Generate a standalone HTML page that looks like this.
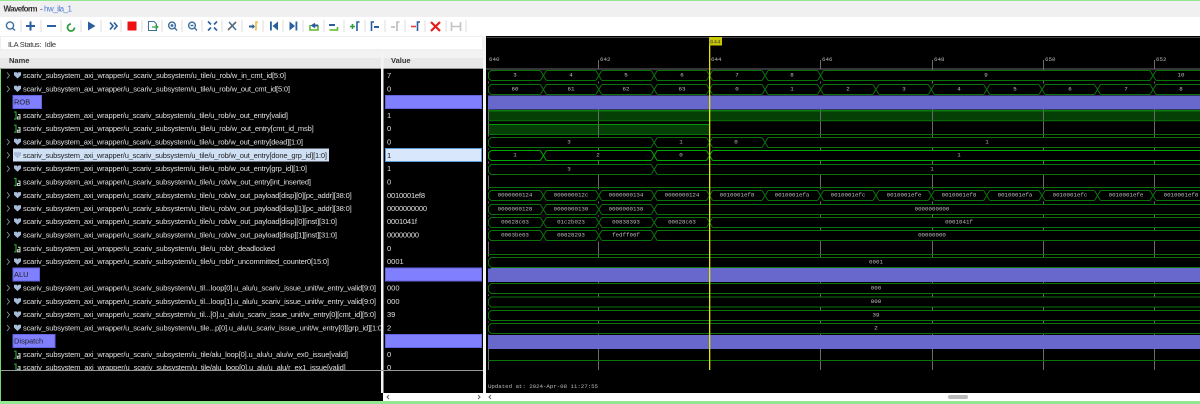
<!DOCTYPE html>
<html><head><meta charset="utf-8"><title>Waveform - hw_ila_1</title>
<style>
html,body{margin:0;padding:0;background:#000;width:1200px;height:404px;overflow:hidden}
svg{display:block}
.n{font:7.5px "Liberation Sans",sans-serif;fill:#e0e0e0}
.v{font:7.5px "Liberation Sans",sans-serif;fill:#e0e0e0}
.h{font:bold 7.5px "Liberation Sans",sans-serif;fill:#333}
.t{font:5.8px "Liberation Mono",monospace;fill:#c0c0c0;text-anchor:middle}
.m{font:5.8px "Liberation Mono",monospace;fill:#b8b8b8}
.r{stroke:#0a730a;fill:#000;stroke-width:1}
.s{stroke:#00a800}
.r text{stroke:none}
.g{fill:#6868cc}
.l{fill:#8080ff;stroke:#6464e0}
.ln{font:7.5px "Liberation Sans",sans-serif;fill:#222}
</style></head><body>
<svg width="1200" height="404" viewBox="0 0 1200 404" xmlns="http://www.w3.org/2000/svg">
<defs>
<clipPath id="nc"><rect x="0" y="69" width="381" height="301"/></clipPath>
<clipPath id="vc"><rect x="383" y="69" width="100" height="301"/></clipPath>
<clipPath id="wc"><rect x="486" y="37" width="714" height="333"/></clipPath>
<g id="x"><rect x="-3" y="-1" width="6" height="12" fill="#000" stroke="none"/><path d="M-3 0L3 10M-3 10L3 0" fill="none"/></g>
<g id="e"><rect x="486" y="-1" width="5" height="12" fill="#000" stroke="none"/><path d="M491 0L488.5 2.5V7.5L491 10" fill="none"/></g>
<g id="b"><path d="M-7 -3L-4.5 0L-7 3" fill="none" stroke="#999" stroke-width=".8"/><path d="M14 -3.2H17L17.5 -2L18 -3.2H21V-.3L17.5 3L14 -.3Z" transform="translate(-14 0)" fill="#a9bcd9"/></g>
<g id="o"><path d="M0 -3.5H2V3.5H0M1 3.5H2" fill="none" stroke="#2e9e3e" stroke-width="1.2"/><path d="M4 -1H6V3.5H3.5V1.5H6" fill="none" stroke="#ccc" stroke-width="1.1"/></g>
</defs>

<!-- window chrome -->
<rect width="1200" height="404" fill="#000"/>
<rect width="1200" height="17" fill="#f0f0f0"/>
<rect width="1200" height="1" fill="#93e793"/>
<text x="3.500" y="11.500" textLength="34" style="font:bold 8px 'Liberation Sans',sans-serif" fill="#333">Waveform</text>
<text x="40" y="11.500" style="font:8px 'Liberation Sans',sans-serif" fill="#333">-</text>
<text x="44" y="11.500" textLength="28" style="font:8px 'Liberation Sans',sans-serif" fill="#4a78d8">hw_ila_1</text>
<rect y="17" width="1200" height="19" fill="#fff"/>

<!-- toolbar separators -->
<path d="M21 20V32M41 20V32M61 20V32M81 20V32M101 20V32M121 20V32M142 20V32M162 20V32M182 20V32M202 20V32M222 20V32M242 20V32M263 20V32M283 20V32M303 20V32M324 20V32M344 20V32M365 20V32M385 20V32M405 20V32M425 20V32M446 20V32M466 20V32" stroke="#ddd" stroke-width="1"/>

<!-- toolbar icons -->
<g fill="none" stroke="#3d6f9e" stroke-width="1.4">
<circle cx="10" cy="25.5" r="3.6"/><path d="M12.7 28.2L15 30.5"/>
<path d="M26 26H35M30.5 21.5V30.5" stroke="#2a5f9e" stroke-width="2"/>
<path d="M47 26H56" stroke="#2a5f9e" stroke-width="2"/>
<path d="M74.5 27.5A3.5 3.5 0 1 1 71 24" stroke="#2e9e3e" stroke-width="1.8"/>
<path d="M110 22.5L113 26L110 29.5M114 22.5L117 26L114 29.5" stroke="#2a5f9e" stroke-width="1.6"/>
<circle cx="172" cy="25.5" r="3.4"/><path d="M174.6 28L177 30.5M170.5 25.5H173.5M172 24V27"/>
<circle cx="192" cy="25.5" r="3.4"/><path d="M194.6 28L197 30.5M190.5 25.5H193.5"/>
<path d="M208 21.5L211 24.5M217 21.5L214 24.5M208 30.5L211 27.5M217 30.5L214 27.5" stroke="#2a5f9e" stroke-width="1.6"/>
<path d="M228 30L236 22" stroke="#666" stroke-width="1.6"/><path d="M229 22L236 30" stroke="#3d6f9e" stroke-width="1.4"/>
</g>
<path d="M88 21.5V30.5L95.5 26Z" fill="#2a5f9e"/>
<rect x="127.500" y="21.500" width="9" height="9" fill="#ee1111"/>
<path d="M148.500 21.500H154L156.500 24V30.500H148.500Z" fill="#fff" stroke="#3d6f9e"/><path d="M152 27H157.500M155.500 25L157.800 27L155.500 29" fill="none" stroke="#2e9e3e" stroke-width="1.200"/>
<path d="M249 26.500H253" stroke="#2a5f9e" stroke-width="2"/><path d="M252.500 24L255 26.500L252.500 29Z" fill="#2a5f9e"/><path d="M256 30.500V22H258" fill="none" stroke="#e8c040" stroke-width="1.600"/>
<g fill="#2a5f9e"><rect x="270" y="21.500" width="1.800" height="9"/><path d="M278 21.500V30.500L272.500 26Z"/><rect x="295.500" y="21.500" width="1.800" height="9"/><path d="M289.500 21.500V30.500L295 26Z"/></g>
<g fill="none" stroke-width="1.600">
<path d="M310 25V30H318V25" stroke="#5cb531"/><path d="M313 25.500H318" stroke="#2a5f9e" stroke-width="2"/><path d="M315 23.500L312 25.500L315 27.500" stroke="#2a5f9e"/>
<path d="M329.500 30H337.500V27" stroke="#5cb531"/><path d="M329 25H335" stroke="#2a5f9e" stroke-width="2"/>
<path d="M350 26.500H355M352.500 24V29" stroke="#2e9e3e"/><path d="M357 31V22H359.500" stroke="#2a5f9e"/>
<path d="M371.500 31V22H374" stroke="#2a5f9e"/><path d="M374 27H379" stroke="#2a5f9e" stroke-width="2"/>
<path d="M391 27H395" stroke="#bbb"/><path d="M397 31V22H399.500" stroke="#bbb"/>
<path d="M411 26.500H416" stroke="#e04040"/><path d="M417.500 31V22H420" stroke="#2a5f9e"/>
<path d="M431 22L440 31M440 22L431 31" stroke="#e81c1c" stroke-width="2.200"/>
<path d="M451.500 22V31M460.500 22V31M452 26.500H460" stroke="#c4c4c4"/>
</g>

<!-- status + headers -->
<rect y="36" width="486" height="15" fill="#f0f0f0"/>
<rect x="1" y="37" width="481" height="12" fill="#fff"/>
<text x="8" y="47" textLength="48" style="font:7.500px 'Liberation Sans',sans-serif" fill="#333">ILA Status:&#160;&#160;Idle</text>
<rect y="51" width="486" height="17" fill="#e8e8e8"/>
<rect y="51" width="486" height="7" fill="#f2f2f2"/>
<rect y="68" width="486" height="1" fill="#999"/>
<text x="9" y="63" class="h">Name</text>
<text x="391" y="63" class="h">Value</text>

<!-- panel gaps -->
<rect x="0" y="69" width="1" height="332" fill="#6fd96f"/>
<rect x="381" y="51" width="2.500" height="342" fill="#f4f4f4"/>
<rect x="483" y="36" width="3" height="357" fill="#f4f4f4"/>

<!-- names -->
<g clip-path="url(#nc)">
<rect x="13" y="95.500" width="28.500" height="13" class="l"/>
<rect x="13" y="268" width="26.500" height="13" class="l"/>
<rect x="13" y="334.500" width="42" height="13" class="l"/>
<rect x="13" y="148.500" width="316" height="13" fill="#cfe0f5"/>
<text x="14" y="104.500" class="ln">ROB</text>
<text x="14" y="277" class="ln">ALU</text>
<text x="14" y="343.500" class="ln">Dispatch</text>

<use href="#b" x="14" y="75.500"/><use href="#b" x="14" y="89"/>
<use href="#o" x="14" y="115.500"/><use href="#o" x="14" y="128.700"/>
<use href="#b" x="14" y="142"/><use href="#b" x="14" y="155.300"/><use href="#b" x="14" y="168.700"/>
<use href="#o" x="14" y="182"/>
<use href="#b" x="14" y="195.300"/><use href="#b" x="14" y="208.500"/><use href="#b" x="14" y="221.700"/><use href="#b" x="14" y="235"/>
<use href="#o" x="14" y="248.300"/>
<use href="#b" x="14" y="261.700"/>
<use href="#b" x="14" y="288"/><use href="#b" x="14" y="301.500"/><use href="#b" x="14" y="314.700"/><use href="#b" x="14" y="328"/>
<use href="#o" x="14" y="354.700"/><use href="#o" x="14" y="367.700"/>

<text class="n" x="23" y="78" textLength="263">scariv_subsystem_axi_wrapper/u_scariv_subsystem/u_tile/u_rob/w_in_cmt_id[5:0]</text>
<text class="n" x="23" y="91.500" textLength="267">scariv_subsystem_axi_wrapper/u_scariv_subsystem/u_tile/u_rob/w_out_cmt_id[5:0]</text>
<text class="n" x="23" y="118" textLength="265">scariv_subsystem_axi_wrapper/u_scariv_subsystem/u_tile/u_rob/w_out_entry[valid]</text>
<text class="n" x="23" y="131.200" textLength="290.700">scariv_subsystem_axi_wrapper/u_scariv_subsystem/u_tile/u_rob/w_out_entry[cmt_id_msb]</text>
<text class="n" x="23" y="144.500" textLength="280">scariv_subsystem_axi_wrapper/u_scariv_subsystem/u_tile/u_rob/w_out_entry[dead][1:0]</text>
<text class="ln" x="23" y="157.800" textLength="304">scariv_subsystem_axi_wrapper/u_scariv_subsystem/u_tile/u_rob/w_out_entry[done_grp_id][1:0]</text>
<text class="n" x="23" y="171.200" textLength="284">scariv_subsystem_axi_wrapper/u_scariv_subsystem/u_tile/u_rob/w_out_entry[grp_id][1:0]</text>
<text class="n" x="23" y="184.500" textLength="288">scariv_subsystem_axi_wrapper/u_scariv_subsystem/u_tile/u_rob/w_out_entry[int_inserted]</text>
<text class="n" x="23" y="197.800" textLength="328.700">scariv_subsystem_axi_wrapper/u_scariv_subsystem/u_tile/u_rob/w_out_payload[disp][0][pc_addr][38:0]</text>
<text class="n" x="23" y="211" textLength="328.700">scariv_subsystem_axi_wrapper/u_scariv_subsystem/u_tile/u_rob/w_out_payload[disp][1][pc_addr][38:0]</text>
<text class="n" x="23" y="224.200" textLength="314">scariv_subsystem_axi_wrapper/u_scariv_subsystem/u_tile/u_rob/w_out_payload[disp][0][inst][31:0]</text>
<text class="n" x="23" y="237.500" textLength="314">scariv_subsystem_axi_wrapper/u_scariv_subsystem/u_tile/u_rob/w_out_payload[disp][1][inst][31:0]</text>
<text class="n" x="23" y="250.800" textLength="252">scariv_subsystem_axi_wrapper/u_scariv_subsystem/u_tile/u_rob/r_deadlocked</text>
<text class="n" x="23" y="264.200" textLength="306">scariv_subsystem_axi_wrapper/u_scariv_subsystem/u_tile/u_rob/r_uncommitted_counter0[15:0]</text>
<text class="n" x="23" y="290.500" textLength="353">scariv_subsystem_axi_wrapper/u_scariv_subsystem/u_til...loop[0].u_alu/u_scariv_issue_unit/w_entry_valid[9:0]</text>
<text class="n" x="23" y="304" textLength="353">scariv_subsystem_axi_wrapper/u_scariv_subsystem/u_til...loop[1].u_alu/u_scariv_issue_unit/w_entry_valid[9:0]</text>
<text class="n" x="23" y="317.200" textLength="353">scariv_subsystem_axi_wrapper/u_scariv_subsystem/u_til...[0].u_alu/u_scariv_issue_unit/w_entry[0][cmt_id][5:0]</text>
<text class="n" x="23" y="330.500" textLength="361">scariv_subsystem_axi_wrapper/u_scariv_subsystem/u_tile...p[0].u_alu/u_scariv_issue_unit/w_entry[0][grp_id][1:0]</text>
<text class="n" x="23" y="357.200" textLength="325">scariv_subsystem_axi_wrapper/u_scariv_subsystem/u_tile/alu_loop[0].u_alu/u_alu/w_ex0_issue[valid]</text>
<text class="n" x="23" y="370.200" textLength="322.700">scariv_subsystem_axi_wrapper/u_scariv_subsystem/u_tile/alu_loop[0].u_alu/u_alu/r_ex1_issue[valid]</text>
</g>
<rect x="1" y="370" width="482" height="1" fill="#999"/>

<!-- values -->
<g clip-path="url(#vc)">
<rect x="385.500" y="95.500" width="96" height="13" class="l"/>
<rect x="385.500" y="268" width="96" height="13" class="l"/>
<rect x="385.500" y="334.500" width="96" height="13" class="l"/>
<rect x="385.500" y="148.500" width="96" height="13" fill="#d8e7fb" stroke="#5b9bd5"/>
<text class="v" x="387" y="78">7</text>
<text class="v" x="387" y="91.500">0</text>
<text class="v" x="387" y="118">1</text>
<text class="v" x="387" y="131.200">0</text>
<text class="v" x="387" y="144.500">0</text>
<text class="ln" x="387" y="157.800">1</text>
<text class="v" x="387" y="171.200">1</text>
<text class="v" x="387" y="184.500">0</text>
<text class="v" x="387" y="197.800" textLength="38">0010001ef8</text>
<text class="v" x="387" y="211" textLength="40">0000000000</text>
<text class="v" x="387" y="224.200" textLength="30">0001041f</text>
<text class="v" x="387" y="237.500" textLength="32">00000000</text>
<text class="v" x="387" y="250.800">0</text>
<text class="v" x="387" y="264.200">0001</text>
<text class="v" x="387" y="290.500">000</text>
<text class="v" x="387" y="304">000</text>
<text class="v" x="387" y="317.200">39</text>
<text class="v" x="387" y="330.500">2</text>
<text class="v" x="387" y="357.200">0</text>
<text class="v" x="387" y="370.200">0</text>
</g>

<!-- waveform -->
<g clip-path="url(#wc)">
<rect x="486.500" y="36.500" width="714" height="1" fill="#888"/>
<!-- bands below grid -->
<rect x="488" y="111" width="712" height="10" fill="#063f06"/>
<rect x="488" y="124" width="222" height="11" fill="#063f06"/>
<!-- grid -->
<path d="M488.500 69V370M598.500 60V370M820.500 60V370M932.500 60V370M1043.500 60V370M1154.500 60V370" stroke="#6a6a6a" fill="none"/>
<path d="M486 69H1200M486 370.500H1200" stroke="#6a6a6a" fill="none"/>
<text class="m" x="489" y="61">640</text><text class="m" x="600" y="61">642</text><text class="m" x="711" y="61">644</text><text class="m" x="822" y="61">646</text><text class="m" x="934" y="61">648</text><text class="m" x="1045" y="61">650</text><text class="m" x="1156" y="61">652</text>

<!-- low/high lines -->
<path d="M488 110.700H1200M488 124.500H710M488 134.500H1200M488 120.800H1200M488 187.500H1200M488 254.500H1200M488 360.500H1200" fill="none" stroke="#0a730a"/>
<path d="M488 110.700H1200M488 124.500H710" fill="none" stroke="#0a960a"/>

<!-- group bars -->
<rect x="488" y="95.500" width="712" height="14" class="g"/>
<rect x="488" y="268" width="712" height="14" class="g"/>
<rect x="488" y="335" width="712" height="14" class="g"/>

<g class="r" transform="translate(0 70.500)"><rect x="487" width="730" height="10"/><use href="#e"/><use href="#x" x="543.400"/><use href="#x" x="598.800"/><use href="#x" x="654.200"/><use href="#x" x="709.600"/><use href="#x" x="765"/><use href="#x" x="820.500"/><use href="#x" x="1153"/>
<text class="t" x="515" y="6">3</text><text class="t" x="571" y="6">4</text><text class="t" x="626" y="6">5</text><text class="t" x="682" y="6">6</text><text class="t" x="737" y="6">7</text><text class="t" x="792" y="6">8</text><text class="t" x="986" y="6">9</text><text class="t" x="1181" y="6">10</text></g>

<g class="r" transform="translate(0 84.500)"><rect x="487" width="730" height="10"/><use href="#e"/><use href="#x" x="543.400"/><use href="#x" x="598.800"/><use href="#x" x="654.200"/><use href="#x" x="709.600"/><use href="#x" x="765"/><use href="#x" x="820.500"/><use href="#x" x="875.900"/><use href="#x" x="931.300"/><use href="#x" x="986.700"/><use href="#x" x="1042"/><use href="#x" x="1097.500"/><use href="#x" x="1153"/>
<text class="t" x="515" y="6">60</text><text class="t" x="571" y="6">61</text><text class="t" x="626" y="6">62</text><text class="t" x="682" y="6">63</text><text class="t" x="737" y="6">0</text><text class="t" x="792" y="6">1</text><text class="t" x="848" y="6">2</text><text class="t" x="904" y="6">3</text><text class="t" x="959" y="6">4</text><text class="t" x="1015" y="6">5</text><text class="t" x="1070" y="6">6</text><text class="t" x="1126" y="6">7</text><text class="t" x="1181" y="6">8</text></g>

<g class="r" transform="translate(0 137.500)"><rect x="487" width="730" height="10"/><use href="#e"/><use href="#x" x="654.200"/><use href="#x" x="709.600"/><use href="#x" x="765"/>
<text class="t" x="569" y="6">3</text><text class="t" x="681" y="6">1</text><text class="t" x="736" y="6">0</text><text class="t" x="987" y="6">1</text></g>

<g class="r s" transform="translate(0 150.500)"><rect x="487" width="730" height="10"/><use href="#e"/><use href="#x" x="543.400"/><use href="#x" x="654.200"/><use href="#x" x="709.600"/>
<text class="t" x="515" y="6">1</text><text class="t" x="598" y="6">2</text><text class="t" x="681" y="6">0</text><text class="t" x="959" y="6">1</text></g>

<g class="r" transform="translate(0 164.500)"><rect x="487" width="730" height="10"/><use href="#e"/><use href="#x" x="654.200"/>
<text class="t" x="569" y="6">3</text><text class="t" x="932" y="6">1</text></g>

<g class="r" transform="translate(0 190.500)"><rect x="487" width="730" height="10"/><use href="#e"/><use href="#x" x="543.400"/><use href="#x" x="598.800"/><use href="#x" x="654.200"/><use href="#x" x="709.600"/><use href="#x" x="765"/><use href="#x" x="820.500"/><use href="#x" x="875.900"/><use href="#x" x="931.300"/><use href="#x" x="986.700"/><use href="#x" x="1042"/><use href="#x" x="1097.500"/><use href="#x" x="1153"/>
<text class="t" x="515" y="6">0000000124</text><text class="t" x="571" y="6">000000012c</text><text class="t" x="626" y="6">0000000134</text><text class="t" x="682" y="6">0000000124</text><text class="t" x="737" y="6">0010001ef8</text><text class="t" x="792" y="6">0010001efa</text><text class="t" x="848" y="6">0010001efc</text><text class="t" x="904" y="6">0010001efe</text><text class="t" x="959" y="6">0010001ef8</text><text class="t" x="1015" y="6">0010001efa</text><text class="t" x="1070" y="6">0010001efc</text><text class="t" x="1126" y="6">0010001efe</text><text class="t" x="1181" y="6">0010001ef8</text></g>

<g class="r" transform="translate(0 204.500)"><rect x="487" width="730" height="10"/><use href="#e"/><use href="#x" x="543.400"/><use href="#x" x="598.800"/><use href="#x" x="654.200"/>
<text class="t" x="515" y="6">0000000128</text><text class="t" x="571" y="6">0000000130</text><text class="t" x="626" y="6">0000000138</text><text class="t" x="932" y="6">0000000000</text></g>

<g class="r" transform="translate(0 217.500)"><rect x="487" width="730" height="10"/><use href="#e"/><use href="#x" x="543.400"/><use href="#x" x="598.800"/><use href="#x" x="654.200"/><use href="#x" x="709.600"/>
<text class="t" x="515" y="6">00628c63</text><text class="t" x="571" y="6">01c2b023</text><text class="t" x="626" y="6">00838393</text><text class="t" x="682" y="6">00628c63</text><text class="t" x="959" y="6">0001041f</text></g>

<g class="r" transform="translate(0 230.500)"><rect x="487" width="730" height="10"/><use href="#e"/><use href="#x" x="543.400"/><use href="#x" x="598.800"/><use href="#x" x="654.200"/>
<text class="t" x="515" y="6">0003be03</text><text class="t" x="571" y="6">00828293</text><text class="t" x="626" y="6">fedff06f</text><text class="t" x="932" y="6">00000000</text></g>

<g class="r" transform="translate(0 257.500)"><rect x="487" width="730" height="10"/><use href="#e"/><text class="t" x="876" y="6">0001</text></g>
<g class="r" transform="translate(0 283.500)"><rect x="487" width="730" height="10"/><use href="#e"/><text class="t" x="876" y="6">000</text></g>
<g class="r" transform="translate(0 297)"><rect x="487" width="730" height="10"/><use href="#e"/><text class="t" x="876" y="6">000</text></g>
<g class="r" transform="translate(0 310.500)"><rect x="487" width="730" height="10"/><use href="#e"/><text class="t" x="876" y="6">39</text></g>
<g class="r" transform="translate(0 323.500)"><rect x="487" width="730" height="10"/><use href="#e"/><text class="t" x="876" y="6">2</text></g>
<rect x="488" y="335" width="712" height="14" class="g"/>

<!-- cursor -->
<rect x="709" y="45" width="1.300" height="325" fill="#e6e600"/>
<rect x="709" y="37" width="13" height="8.500" fill="#c8c800"/>
<text class="m" x="710" y="43.500" style="fill:#444">644</text>
</g>
<text class="m" x="488" y="388" textLength="110">Updated at: 2024-Apr-08 11:27:55</text>

<!-- scrollbars & bottom -->
<rect x="383" y="393" width="817" height="8" fill="#fff"/>
<rect x="483" y="370" width="3" height="23" fill="#f4f4f4"/>
<path d="M389 395L387 397L389 399M478 395L480 397L478 399M491 395L489 397L491 399" fill="none" stroke="#666"/>
<rect x="948" y="395" width="20" height="4" rx="2" fill="#bbb"/>
<rect y="401" width="1200" height="3" fill="#93e793"/>
</svg>
</body></html>
